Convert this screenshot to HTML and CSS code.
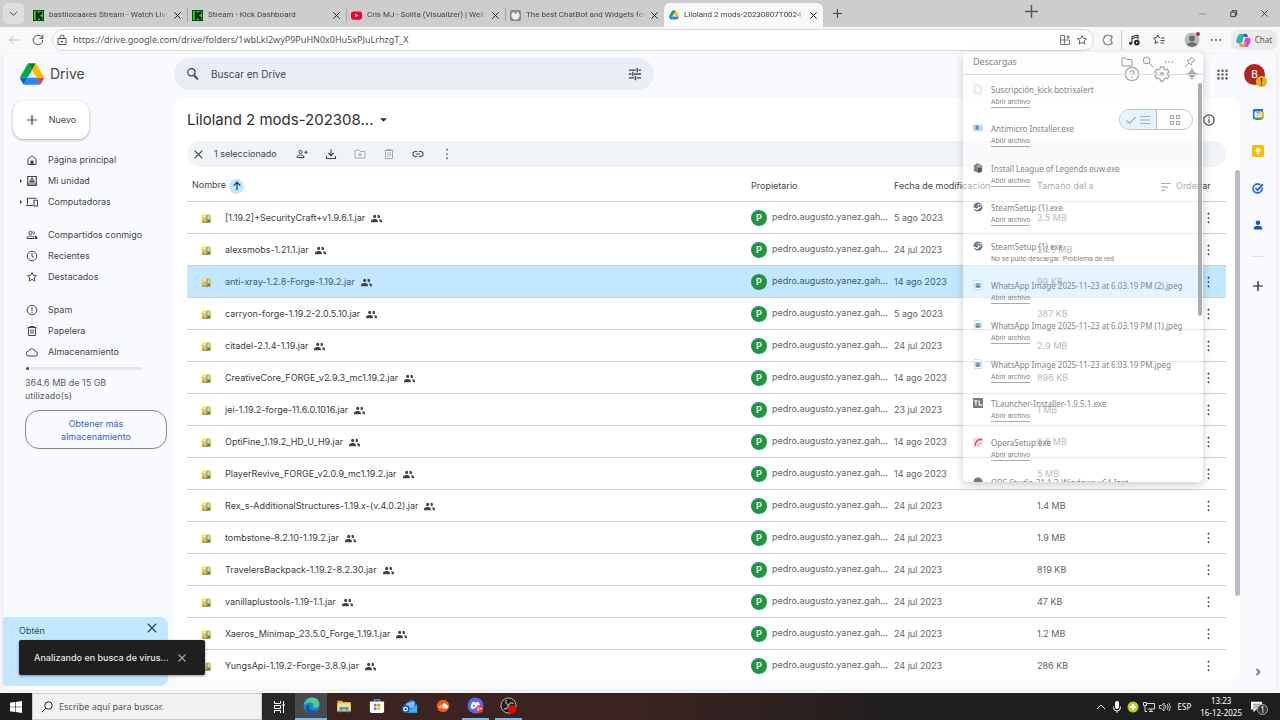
FILE: index.html
```html
<!DOCTYPE html>
<html lang="es">
<head>
<meta charset="utf-8">
<meta name="viewport" content="width=device-width, initial-scale=1">
<title>Liloland 2 mods - Google Drive</title>
<link rel="stylesheet" href="styles.css">
</head>
<body>
<svg class="sprite" aria-hidden="true">
  <symbol id="x" viewBox="0 0 10 10"><path d="M1.500 1.500l7 7M8.500 1.500l-7 7" fill="none" stroke="currentColor" stroke-width="1.100"/></symbol>
  <symbol id="plus" viewBox="0 0 12 12"><path d="M6 1v10M1 6h10" fill="none" stroke="currentColor" stroke-width="1.200"/></symbol>
  <symbol id="kick" viewBox="0 0 12 12"><path d="M0 0h12v12H0z" fill="#0b140b"/><path d="M.8.8h10.400v10.400H.8z" fill="#14e914"/><path d="M3 1.500h2.600v2h1V2.500h1V1.500h2.600v2.800h-1v1H8v1.400h1.200v1h1v2.800H7.600v-1h-1v-1h-1v2H3z" fill="#0b140b"/></symbol>
  <symbol id="drive" viewBox="0 0 87.300 78"><path fill="#0066da" d="M6.600 66.850l3.850 6.650c.8 1.400 1.950 2.500 3.300 3.300L27.500 53H0c0 1.550.4 3.100 1.200 4.500z"/><path fill="#00ac47" d="M43.650 25L29.900 1.200c-1.350.8-2.500 1.900-3.300 3.300L1.200 48.500A9 9 0 0 0 0 53h27.500z"/><path fill="#ea4335" d="M73.550 76.800c1.350-.8 2.500-1.900 3.300-3.300l1.600-2.750L86.100 57.500c.8-1.400 1.200-2.950 1.200-4.500H59.800l5.850 11.500z"/><path fill="#00832d" d="M43.650 25L57.400 1.200C56.050.4 54.500 0 52.900 0H34.400c-1.600 0-3.150.45-4.500 1.200z"/><path fill="#2684fc" d="M59.800 53H27.500L13.750 76.800c1.350.8 2.900 1.200 4.500 1.200h50.800c1.600 0 3.150-.45 4.500-1.200z"/><path fill="#ffba00" d="M73.400 26.500L60.700 4.500c-.8-1.400-1.950-2.500-3.300-3.300L43.650 25 59.800 53h27.450c0-1.550-.4-3.100-1.200-4.500z"/></symbol>
  <symbol id="search" viewBox="0 0 24 24"><path fill="currentColor" d="M15.500 14h-.79l-.28-.27A6.500 6.500 0 1 0 13 14.910l.27.280v.79l5 4.990L20.490 19zM9.500 14a4.500 4.500 0 1 1 0-9 4.500 4.500 0 0 1 0 9z"/></symbol>
  <symbol id="lens" viewBox="0 0 16 16"><path fill="none" stroke="currentColor" stroke-width="1.200" d="M9.500 9.500L15 15M6 10.500a4.500 4.500 0 1 0 0-9 4.500 4.500 0 0 0 0 9z"/></symbol>
  <symbol id="people" viewBox="0 0 24 24"><path fill="currentColor" d="M8 11a3.500 3.500 0 1 0 0-7 3.500 3.500 0 0 0 0 7zm8 0a3.500 3.500 0 1 0-2-6.300 5.500 5.500 0 0 1 0 5.600c.6.400 1.300.7 2 .7zM8 13c-2.700 0-8 1.300-8 4v3h15v-3c0-2.700-4.300-4-7-4zm8.500 0c1.400 1 2.500 2.300 2.500 4v3h5v-3c0-2.400-4.200-3.800-7.500-4z"/></symbol>
  <symbol id="people-o" viewBox="0 0 24 24"><path fill="none" stroke="currentColor" stroke-width="2" d="M9 11a3.200 3.200 0 1 0 0-6.400A3.200 3.200 0 0 0 9 11zM2 19v-1.500C2 15.500 6 14 9 14s7 1.500 7 3.500V19zM14.500 4.800a3.200 3.200 0 0 1 0 6"/><path fill="currentColor" d="M17 13c3 .5 6 2 6 4.500V20h-5v-2.500c0-2-.5-3.500-1-4.500z"/></symbol>
  <symbol id="dots-v" viewBox="0 0 4 14"><g fill="currentColor"><circle cx="2" cy="2" r="1"/><circle cx="2" cy="7" r="1"/><circle cx="2" cy="12" r="1"/></g></symbol>
  <symbol id="dots-h" viewBox="0 0 14 4"><g fill="currentColor"><circle cx="3" cy="2" r=".9"/><circle cx="7" cy="2" r=".9"/><circle cx="11" cy="2" r=".9"/></g></symbol>
  <symbol id="jar" viewBox="0 0 12 12"><path fill="#d9c63e" d="M1 3.500L2.500 1.500h7L11 3.500V10l-1 1H1.500L1 10z"/><path fill="#f2e98c" d="M1.500 3.500L3 2h4L6 5H1.500z"/><path fill="#b5a432" d="M1 9h5v2H1.500z"/><path fill="#7e8a80" d="M6 2.500h2V11H6z"/><path fill="#c9d3dc" d="M7 3.500h2.500V7H7z"/><path fill="#51625c" d="M8 7h1.700v3H8z"/></symbol>
  <symbol id="steam" viewBox="0 0 12 12"><circle cx="6" cy="6" r="5.500" fill="#657789"/><path d="M.8 7l4 2 3.500-3" fill="none" stroke="#fff" stroke-width="1.600"/><circle cx="7.800" cy="4.600" r="2" fill="#657789" stroke="#fff"/></symbol>
  <symbol id="image" viewBox="0 0 12 12"><path d="M1.500.5h7l2 2v9h-9z" fill="#fff" stroke="#bcc8d2" stroke-width=".8"/><path d="M3 3.500h6v5.500H3z" fill="#7eaed2"/><path d="M3 9l2.500-2.500L9 9z" fill="#49789b"/></symbol>
  <symbol id="star" viewBox="0 0 24 24"><path fill="none" stroke="currentColor" stroke-width="1.900" stroke-linejoin="round" d="M12 3l2.700 5.800 6.300.7-4.700 4.300 1.300 6.200-5.600-3.200L6.400 20l1.300-6.200L3 9.500l6.300-.7z"/></symbol>
  <symbol id="trash" viewBox="0 0 24 24"><path fill="none" stroke="currentColor" stroke-width="2" d="M3 5h18M8 5V3h8v2M5 5v16h14V5M10 8.500v9M14 8.500v9"/></symbol>
</svg>

<header class="tabstrip">
  <button class="tab-menu" aria-label="Menú de pestañas"><svg viewBox="0 0 10 10"><path d="M1 3l4 4 4-4" fill="none" stroke="#333"/></svg></button>
  <div class="tab"><svg class="fav"><use href="#kick"/></svg><span>bastiiocaares Stream - Watch Live</span><button aria-label="Cerrar"><svg><use href="#x"/></svg></button></div>
  <div class="tab"><svg class="fav"><use href="#kick"/></svg><span>Stream - Kick Dashboard</span><button aria-label="Cerrar"><svg><use href="#x"/></svg></button></div>
  <div class="tab"><svg class="fav" viewBox="0 0 12 12"><rect y="1.500" width="12" height="9" rx="2.500" fill="#f00033"/><path d="M4.600 4l3.600 2-3.600 2z" fill="#fff"/></svg><span>Cris MJ - Solita (Visualizer) | Welcome</span><button aria-label="Cerrar"><svg><use href="#x"/></svg></button></div>
  <div class="tab"><svg class="fav" viewBox="0 0 12 12"><rect width="12" height="12" rx="2" fill="#888"/><circle cx="6" cy="6" r="4.500" fill="#eee"/><path d="M6 0v4M4 2l2 2 2-2" stroke="#888" fill="none"/></svg><span>The best ChatBot and Widgets for</span><button aria-label="Cerrar"><svg><use href="#x"/></svg></button></div>
  <div class="tab active"><svg class="fav"><use href="#drive"/></svg><span>Liloland 2 mods-20230807T002415Z</span><button aria-label="Cerrar"><svg><use href="#x"/></svg></button></div>
  <button class="new-tab" aria-label="Nueva pestaña"><svg><use href="#plus"/></svg></button>
  <div class="window-controls">
    <button aria-label="Minimizar"><svg viewBox="0 0 10 10"><path d="M1 5.500h8" stroke="#888"/></svg></button>
    <button aria-label="Restaurar"><svg viewBox="0 0 10 10"><path d="M2 3.500h5v5H2zM3.500 3V1.800h5v5H7.500" fill="none" stroke="#222" stroke-width=".9"/></svg></button>
    <button aria-label="Cerrar ventana"><svg><use href="#x"/></svg></button>
  </div>
</header>

<div class="toolbar">
  <button class="back" aria-label="Atrás"><svg viewBox="0 0 12 12"><path d="M11 6H1.500M5.500 2l-4 4 4 4" fill="none" stroke="currentColor"/></svg></button>
  <button aria-label="Actualizar"><svg viewBox="0 0 12 12"><path d="M10.500 4.300A4.800 4.800 0 1 0 10.800 6M10.800 1v3.500H7.500" fill="none" stroke="currentColor"/></svg></button>
  <div class="address">
    <svg viewBox="0 0 12 12"><path d="M2 4.500h8v6H2zM4 4.500V3a2 2 0 0 1 4 0v1.500" fill="none" stroke="currentColor"/><circle cx="6" cy="7.500" r=".8"/></svg>
    <input aria-label="Dirección" value="https://drive.google.com/drive/folders/1wbLkl2wyP9PuHN0x0Hu5xPJuLrhzgT_X">
    <button aria-label="Aplicaciones"><svg viewBox="0 0 12 12"><path d="M1.500 1.500h4v9h-4zM1.500 6h9v4.500h-5M9 1v4M7 3h4" fill="none" stroke="currentColor" stroke-width=".8"/></svg></button>
    <button aria-label="Favorito"><svg><use href="#star"/></svg></button>
  </div>
  <div class="tools">
    <button aria-label="Extensiones"><svg viewBox="0 0 12 12"><path d="M4.300 2a1.600 1.600 0 0 1 3 0H10v2.500a1.500 1.500 0 1 0 0 3V10H7.500a1.700 1.700 0 0 1-3.200 0H2.200V7.800a1.800 1.800 0 0 1 0-3.400V2z" fill="none" stroke="currentColor" stroke-width=".9"/></svg></button>
    <button class="divided" aria-label="Multimedia"><svg viewBox="0 0 12 12"><path d="M4 9V2.500L10 1v4.500M4 4.500l6-1.500" fill="none" stroke="#222"/><circle cx="2.600" cy="9.300" r="1.500" fill="#222"/><circle cx="8.800" cy="8.600" r="2.800" fill="#222"/><path d="M8 7.400l2 1.200-2 1.200z" fill="#fff"/></svg></button>
    <button aria-label="Favoritos"><svg viewBox="0 0 12 12"><path d="M7 3.500H6L4.700 1 3.400 3.800.5 4.200l2.200 2L2 9.500 4.700 8l1 .6M8 4h3.500M7.500 6.500h4M7.500 9h3.500" fill="none" stroke="#333" stroke-width=".9"/></svg></button>
    <button class="profile" aria-label="Perfil"><svg viewBox="0 0 16 16"><circle cx="8" cy="8" r="7.500" fill="#bbb"/><circle cx="8" cy="6.500" r="3" fill="#6b6b6b"/><path d="M3 12.500c1-3 9-3 10 0-2 3-8 3-10 0z" fill="#6b6b6b"/><circle cx="14" cy="2" r="1.900" fill="#c50f35"/></svg></button>
    <button class="more" aria-label="Configuración y más"><svg><use href="#dots-h"/></svg></button>
  </div>
  <button class="chat"><svg viewBox="0 0 16 16"><path d="M5 1h5c2 0 2 1 2.500 3H8L6 11H3C0 11 0 8 1 6s2-5 4-5z" fill="#168fd7"/><path d="M1 7c.5-3 2-6 4-6h3L5 11H3C1 11 .7 9 1 7z" fill="#37b7a5"/><path d="M11 15H6c-2 0-2-1-2.500-3H8l2-7h3c3 0 3 3 2 5s-2 5-4 5z" fill="#cf4ccb"/><path d="M3.500 12H8l1-3.500 2 1.500-2 5H6c-2 0-2-1-2.500-3z" fill="#f29a45"/><path d="M9 1h1c2 0 2 1 2.500 3H9z" fill="#294fc5"/></svg>Chat</button>
</div>

<div class="drive">
  <header class="drive-head">
    <a class="brand" href="#"><svg><use href="#drive"/></svg>Drive</a>
    <form class="search" role="search"><svg><use href="#search"/></svg><input aria-label="Buscar en Drive" placeholder="Buscar en Drive"><button type="button" aria-label="Búsqueda avanzada"><svg viewBox="0 0 16 16"><path d="M1 3.500h8M12 3.500h3M10.500 1v5M1 8h3M7 8h8M5.500 5.500v5M1 12.500h6M10 12.500h5M8.500 10v5" fill="none" stroke="currentColor" stroke-width="1.500"/></svg></button></form>
    <div class="head-tools">
      <button aria-label="Ayuda"><svg viewBox="0 0 16 16"><circle cx="8" cy="8" r="6.600" fill="none" stroke="currentColor" stroke-width="1.300"/><path d="M6 6.500c0-2.600 4-2.600 4 0 0 1.300-2 1.600-2 3M8 10.800v1.500" fill="none" stroke="currentColor" stroke-width="1.300"/></svg></button>
      <button aria-label="Configuración"><svg viewBox="0 0 16 16"><path d="M6.500 1h3l.5 2 1.500.9 2-.6L15 6l-1.500 1.300v1.400L15 10l-1.500 2.700-2-.6-1.500.9-.5 2h-3L6 13l-1.500-.9-2 .6L1 10l1.500-1.300V7.300L1 6l1.500-2.700 2 .6L6 3z" fill="none" stroke="currentColor" stroke-width="1.300"/><circle cx="8" cy="8" r="2" fill="currentColor"/></svg></button>
      <button aria-label="Gemini"><svg viewBox="0 0 16 16"><path d="M8 1c.9 4.200 2.800 6.100 7 7-4.200.9-6.100 2.800-7 7-.9-4.200-2.800-6.100-7-7 4.200-.9 6.100-2.800 7-7z" fill="currentColor"/></svg></button>
      <button aria-label="Aplicaciones de Google"><svg viewBox="0 0 16 16"><path d="M3 2v12M8 2v12M13 2v12" stroke="currentColor" stroke-width="2.600" stroke-dasharray="2.600 2.100" fill="none"/></svg></button>
      <button class="account" aria-label="Cuenta">B<svg viewBox="0 0 10 10"><circle cx="5" cy="5" r="5" fill="#efb01c"/><path d="M5 1.800v4M5 7v1.300" stroke="#4d3300" stroke-width="1.300"/></svg></button>
    </div>
  </header>

  <div class="body">
    <aside class="sidebar">
      <button class="new"><svg><use href="#plus"/></svg>Nuevo</button>
      <nav>
        <div class="group">
          <a href="#"><svg viewBox="0 0 24 24"><path d="M4 10l8-6.500L20 10v11H4z" fill="none" stroke="currentColor" stroke-width="2"/><path d="M9 13h6v8H9z" fill="currentColor"/></svg>Página principal</a>
          <a href="#" class="tree"><svg viewBox="0 0 24 24"><path d="M3.500 3h17v18h-17zM4 18h16" fill="none" stroke="currentColor" stroke-width="2.400"/><path d="M12 6.500l4 7H8z" fill="none" stroke="currentColor" stroke-width="2.600"/></svg>Mi unidad</a>
          <a href="#" class="tree"><svg viewBox="0 0 24 24"><path d="M3 17V4.500h18M0 19h14M16 8.500h7V20h-7z" fill="none" stroke="currentColor" stroke-width="2.200"/></svg>Computadoras</a>
        </div>
        <div class="group">
          <a href="#"><svg><use href="#people-o"/></svg>Compartidos conmigo</a>
          <a href="#"><svg viewBox="0 0 24 24"><circle cx="12" cy="12" r="9.500" fill="none" stroke="currentColor" stroke-width="2"/><path d="M12 6v6.500l4 2.500" fill="none" stroke="currentColor" stroke-width="2"/></svg>Recientes</a>
          <a href="#"><svg><use href="#star"/></svg>Destacados</a>
        </div>
        <div class="group">
          <a href="#"><svg viewBox="0 0 24 24"><circle cx="12" cy="12" r="9.500" fill="none" stroke="currentColor" stroke-width="2"/><path d="M12 6v7.500M12 15.500v2.500" stroke="currentColor" stroke-width="2.200"/></svg>Spam</a>
          <a href="#"><svg><use href="#trash"/></svg>Papelera</a>
          <a href="#"><svg viewBox="0 0 24 24"><path d="M6 20a5 5 0 0 1-.8-10A7 7 0 0 1 18.500 11 4.500 4.500 0 0 1 18.500 20z" fill="none" stroke="currentColor" stroke-width="2"/></svg>Almacenamiento</a>
        </div>
      </nav>
      <div class="meter"><i></i></div>
      <p class="quota">364.6 MB de 15 GB utilizado(s)</p>
      <button class="upgrade">Obtener más almacenamiento</button>
      <section class="promo"><span>Obtén</span><button aria-label="Cerrar"><svg><use href="#x"/></svg></button></section>
    </aside>

    <main class="panel">
      <div class="title-row">
        <h1>Liloland 2 mods-202308... <svg viewBox="0 0 10 5"><path d="M0 0h10L5 5z" fill="currentColor"/></svg></h1>
        <div class="view">
          <button class="on" aria-label="Vista de lista"><svg viewBox="0 0 12 12"><path d="M1.500 6.500l3 3 6-6.500" fill="none" stroke="currentColor" stroke-width="1.200"/></svg><svg viewBox="0 0 12 12"><path d="M1 2.500h10M1 6h10M1 9.500h10" stroke="currentColor" stroke-width="1.200"/></svg></button>
          <button aria-label="Vista de cuadrícula"><svg viewBox="0 0 12 12"><path d="M1.500 1.500h3v3h-3zM7.500 1.500h3v3h-3zM1.500 7.500h3v3h-3zM7.500 7.500h3v3h-3z" fill="none" stroke="currentColor" stroke-width="1.200"/></svg></button>
        </div>
        <button class="info" aria-label="Ver detalles"><svg viewBox="0 0 12 12"><circle cx="6" cy="6" r="5.200" fill="none" stroke="currentColor" stroke-width="1.200"/><path d="M6 2.800v1.300M6 5v4" stroke="currentColor" stroke-width="1.200"/></svg></button>
      </div>
      <div class="actions">
        <button aria-label="Quitar selección"><svg><use href="#x"/></svg></button><span>1 seleccionado</span>
        <button aria-label="Compartir"><svg viewBox="0 0 24 24"><path fill="none" stroke="currentColor" stroke-width="2" d="M9 11a3.200 3.200 0 1 0 0-6.400A3.200 3.200 0 0 0 9 11zM2 19v-1.500C2 15.500 6 14 9 14s7 1.500 7 3.500V19zM20 5v7M16.500 8.500h7"/></svg></button>
        <button aria-label="Descargar"><svg viewBox="0 0 24 24"><path fill="none" stroke="currentColor" stroke-width="2.200" d="M12 3v12M6.500 10l5.500 5.500 5.500-5.500M3 16v5h18v-5"/></svg></button>
        <button class="off" aria-label="Mover"><svg viewBox="0 0 24 24"><path fill="none" stroke="currentColor" stroke-width="2" d="M2 4.500h8l2 2.500h10v13H2zM12 9.500v7.500M8.500 13h7"/></svg></button>
        <button class="off" aria-label="Eliminar"><svg><use href="#trash"/></svg></button>
        <button aria-label="Copiar vínculo"><svg viewBox="0 0 24 24"><path fill="none" stroke="currentColor" stroke-width="2.200" d="M10.500 7H7a5 5 0 0 0 0 10h3.500M13.500 7H17a5 5 0 0 1 0 10h-3.500M8 12h8"/></svg></button>
        <button aria-label="Más acciones"><svg><use href="#dots-v"/></svg></button>
      </div>
      <div class="listing">
        <table>
          <colgroup><col><col class="c-owner"><col class="c-date"><col class="c-size"><col class="c-menu"></colgroup>
          <thead><tr><th>Nombre<span class="sort"><svg viewBox="0 0 12 12"><path d="M6 11V1.500M2 5.500l4-4 4 4" fill="none" stroke="#134a68" stroke-width="1.500"/></svg></span></th><th>Propietario</th><th>Fecha de modificación</th><th><div class="cut">Tamaño del archivo</div></th><th class="order"><svg viewBox="0 0 12 12"><path d="M1 2.500h10M1 6h7M1 9.500h4" stroke="currentColor" stroke-width="1.200"/></svg>Ordenar</th></tr></thead>
          <tbody>
            <tr><td><svg class="jar"><use href="#jar"/></svg>[1.19.2]+SecurityCraft+v1.9.6.1.jar<svg class="shared"><use href="#people"/></svg></td><td><b>P</b>pedro.augusto.yanez.gah...</td><td>5 ago 2023</td><td>3.5 MB</td><td><button aria-label="Más"><svg><use href="#dots-v"/></svg></button></td></tr>
            <tr><td><svg class="jar"><use href="#jar"/></svg>alexsmobs-1.21.1.jar<svg class="shared"><use href="#people"/></svg></td><td><b>P</b>pedro.augusto.yanez.gah...</td><td>24 jul 2023</td><td>24.5 MB</td><td><button aria-label="Más"><svg><use href="#dots-v"/></svg></button></td></tr>
            <tr class="selected"><td><svg class="jar"><use href="#jar"/></svg>anti-xray-1.2.8-Forge-1.19.2.jar<svg class="shared"><use href="#people"/></svg></td><td><b>P</b>pedro.augusto.yanez.gah...</td><td>14 ago 2023</td><td>99 KB</td><td><button aria-label="Más"><svg><use href="#dots-v"/></svg></button></td></tr>
            <tr><td><svg class="jar"><use href="#jar"/></svg>carryon-forge-1.19.2-2.0.5.10.jar<svg class="shared"><use href="#people"/></svg></td><td><b>P</b>pedro.augusto.yanez.gah...</td><td>5 ago 2023</td><td>387 KB</td><td><button aria-label="Más"><svg><use href="#dots-v"/></svg></button></td></tr>
            <tr><td><svg class="jar"><use href="#jar"/></svg>citadel-2.1.4-1.19.jar<svg class="shared"><use href="#people"/></svg></td><td><b>P</b>pedro.augusto.yanez.gah...</td><td>24 jul 2023</td><td>2.9 MB</td><td><button aria-label="Más"><svg><use href="#dots-v"/></svg></button></td></tr>
            <tr><td><svg class="jar"><use href="#jar"/></svg>CreativeCore_FORGE_v2.9.3_mc1.19.2.jar<svg class="shared"><use href="#people"/></svg></td><td><b>P</b>pedro.augusto.yanez.gah...</td><td>14 ago 2023</td><td>896 KB</td><td><button aria-label="Más"><svg><use href="#dots-v"/></svg></button></td></tr>
            <tr><td><svg class="jar"><use href="#jar"/></svg>jei-1.19.2-forge-11.6.0.1016.jar<svg class="shared"><use href="#people"/></svg></td><td><b>P</b>pedro.augusto.yanez.gah...</td><td>23 jul 2023</td><td>1 MB</td><td><button aria-label="Más"><svg><use href="#dots-v"/></svg></button></td></tr>
            <tr><td><svg class="jar"><use href="#jar"/></svg>OptiFine_1.19.2_HD_U_H9.jar<svg class="shared"><use href="#people"/></svg></td><td><b>P</b>pedro.augusto.yanez.gah...</td><td>14 ago 2023</td><td>6.6 MB</td><td><button aria-label="Más"><svg><use href="#dots-v"/></svg></button></td></tr>
            <tr><td><svg class="jar"><use href="#jar"/></svg>PlayerRevive_FORGE_v2.0.9_mc1.19.2.jar<svg class="shared"><use href="#people"/></svg></td><td><b>P</b>pedro.augusto.yanez.gah...</td><td>14 ago 2023</td><td>5 MB</td><td><button aria-label="Más"><svg><use href="#dots-v"/></svg></button></td></tr>
            <tr><td><svg class="jar"><use href="#jar"/></svg>Rex_s-AdditionalStructures-1.19.x-(v.4.0.2).jar<svg class="shared"><use href="#people"/></svg></td><td><b>P</b>pedro.augusto.yanez.gah...</td><td>24 jul 2023</td><td>1.4 MB</td><td><button aria-label="Más"><svg><use href="#dots-v"/></svg></button></td></tr>
            <tr><td><svg class="jar"><use href="#jar"/></svg>tombstone-8.2.10-1.19.2.jar<svg class="shared"><use href="#people"/></svg></td><td><b>P</b>pedro.augusto.yanez.gah...</td><td>24 jul 2023</td><td>1.9 MB</td><td><button aria-label="Más"><svg><use href="#dots-v"/></svg></button></td></tr>
            <tr><td><svg class="jar"><use href="#jar"/></svg>TravelersBackpack-1.19.2-8.2.30.jar<svg class="shared"><use href="#people"/></svg></td><td><b>P</b>pedro.augusto.yanez.gah...</td><td>24 jul 2023</td><td>819 KB</td><td><button aria-label="Más"><svg><use href="#dots-v"/></svg></button></td></tr>
            <tr><td><svg class="jar"><use href="#jar"/></svg>vanillaplustools-1.19-1.1.jar<svg class="shared"><use href="#people"/></svg></td><td><b>P</b>pedro.augusto.yanez.gah...</td><td>24 jul 2023</td><td>47 KB</td><td><button aria-label="Más"><svg><use href="#dots-v"/></svg></button></td></tr>
            <tr><td><svg class="jar"><use href="#jar"/></svg>Xaeros_Minimap_23.5.0_Forge_1.19.1.jar<svg class="shared"><use href="#people"/></svg></td><td><b>P</b>pedro.augusto.yanez.gah...</td><td>24 jul 2023</td><td>1.2 MB</td><td><button aria-label="Más"><svg><use href="#dots-v"/></svg></button></td></tr>
            <tr><td><svg class="jar"><use href="#jar"/></svg>YungsApi-1.19.2-Forge-3.8.9.jar<svg class="shared"><use href="#people"/></svg></td><td><b>P</b>pedro.augusto.yanez.gah...</td><td>24 jul 2023</td><td>286 KB</td><td><button aria-label="Más"><svg><use href="#dots-v"/></svg></button></td></tr>
          </tbody>
        </table>
        <div class="scroll"></div>
      </div>
    </main>

    <aside class="rail">
      <button aria-label="Calendar"><svg viewBox="0 0 13 13"><path d="M1 2a1 1 0 0 1 1-1h10v3H3v8H2a1 1 0 0 1-1-1z" fill="#2b6fdb"/><path d="M10 4h3v6h-3z" fill="#fbbc04"/><path d="M3 10h7v3H3z" fill="#34a853"/><path d="M10 10h3l-3 3z" fill="#ea4335"/><path d="M3 4h7v6H3z" fill="#fff"/><text x="6.500" y="9" font-size="5" text-anchor="middle" fill="#1967d2">31</text></svg></button>
      <button aria-label="Keep"><svg viewBox="0 0 13 13"><rect width="13" height="13" rx="1.500" fill="#fbbc04"/><circle cx="6.500" cy="5.800" r="2.600" fill="#fff"/><path d="M5.200 8.500h2.600V10H5.200z" fill="#fff"/></svg></button>
      <button aria-label="Tasks"><svg viewBox="0 0 13 13"><circle cx="6" cy="7" r="4.800" fill="none" stroke="#2f6fe0" stroke-width="2"/><path d="M3.800 6.500l2.200 2.300 5.800-6.500" fill="none" stroke="#f8fafd" stroke-width="3"/><path d="M3.800 6.500l2.200 2.300 5.800-6.500" fill="none" stroke="#2463c8" stroke-width="1.900"/></svg></button>
      <button aria-label="Contactos"><svg viewBox="0 0 13 13"><circle cx="6.500" cy="4" r="2.500" fill="#1a55c5"/><path d="M2 11.500V9.500c0-3 9-3 9 0v2z" fill="#1a55c5"/></svg></button>
      <hr>
      <button aria-label="Obtener complementos"><svg><use href="#plus"/></svg></button>
      <button class="hide" aria-label="Ocultar panel"><svg viewBox="0 0 12 12"><path d="M4.500 3l3 3-3 3" fill="none" stroke="#555" stroke-width="1.400"/></svg></button>
    </aside>
  </div>

  <div class="toast" role="status"><span>Analizando en busca de virus...</span><button aria-label="Cerrar"><svg><use href="#x"/></svg></button></div>
</div>

<footer class="taskbar">
  <button class="start" aria-label="Inicio"><svg viewBox="0 0 12 12"><path d="M0 1.700l5-.7v4.700H0zM5.600.9L12 0v5.700H5.600zM0 6.300h5V11l-5-.7zM5.600 6.300H12V12l-6.400-.9z" fill="#fff"/></svg></button>
  <label class="task-search"><svg viewBox="0 0 12 12"><circle cx="7.500" cy="4.500" r="3.700" fill="none" stroke="#222"/><path d="M4.700 7.300L.8 11.200" stroke="#222"/></svg><input placeholder="Escribe aquí para buscar." aria-label="Escribe aquí para buscar"></label>
  <button class="taskview" aria-label="Vista de tareas"><svg viewBox="0 0 12 12"><path d="M1.500 0v2.500h6V0M1.500 4.500h6v3h-6zM1.500 12V9.500h6V12M10.500 0v12" fill="none" stroke="#fff"/><path d="M9.500 3h2v2h-2z" fill="#fff"/></svg></button>
  <div class="apps">
    <button class="current open" aria-label="Edge"><svg viewBox="0 0 18 18"><circle cx="9" cy="9" r="8.500" fill="#1a84d2"/><path d="M1 8C2 3 6 .5 9.500.5c5 0 8 3.500 8 7 0 2.500-2 4-4.500 4-2 0-3-1-2-2.500C12 6 8 4 1 8z" fill="#4fd08a"/><path d="M1 8C2 3 6 .5 9.500.5 5 1 6 5 1 8z" fill="#35c1c8"/><path d="M7 8c-2 4 1 8 9 6-3 4-9 4-12.500 1C2 12 3 8 7 8z" fill="#1554a4"/></svg></button>
    <button aria-label="Explorador"><svg viewBox="0 0 18 18"><path d="M1.500 3h5l1.500 1.500h8.500V15h-15z" fill="#e8b33d"/><path d="M1.500 6h15v9h-15z" fill="#fbdd7c"/><path d="M4 10h10v6h-3v-3H7v3H4z" fill="#4a9ad4"/></svg></button>
    <button aria-label="Store"><svg viewBox="0 0 18 18"><path d="M6 5V2h6v3" fill="none" stroke="#3999d0" stroke-width="1.500"/><path d="M1 4h16v11a2 2 0 0 1-2 2H3a2 2 0 0 1-2-2z" fill="#fff"/><path d="M5.500 6.500h3v3h-3z" fill="#ef5a3c"/><path d="M9.500 6.500h3v3h-3z" fill="#7db928"/><path d="M5.500 10.500h3v3h-3z" fill="#22a3e6"/><path d="M9.500 10.500h3v3h-3z" fill="#f8b51d"/></svg></button>
    <button aria-label="Outlook"><svg viewBox="0 0 18 18"><path d="M2 8l9-6.500L17 7v9.500H3z" fill="#1f6ed0"/><path d="M5 6l9-2.500V11H5z" fill="#7cc3f5"/><path d="M3 16.500L17 8v8.500z" fill="#3fb2f2"/><rect y="8.500" width="8" height="8" rx="1.500" fill="#0c59b0"/><circle cx="4" cy="12.500" r="2" fill="none" stroke="#fff" stroke-width="1.300"/></svg></button>
    <button aria-label="SoundCloud"><svg viewBox="0 0 18 18"><circle cx="9" cy="9" r="7" fill="#f0581a"/><path d="M9 6.500c2-1 4 .5 4 2 2 0 2 3 0 3H9zM5 9v2M6.500 8v3.500M8 7v4.500" fill="#fff" stroke="#fff" stroke-width=".6"/></svg></button>
    <button class="open" aria-label="Discord"><svg viewBox="0 0 18 18"><circle cx="9" cy="9" r="8.500" fill="#5865e8"/><path d="M4 12c0-3 .5-5 1.500-6.500L8 5l.5 1h1l.5-1 2.500.5C13.500 7 14 9 14 12l-2.500 1-1-1h-3l-1 1z" fill="#fff"/><circle cx="7.300" cy="9.300" r="1" fill="#5865e8"/><circle cx="13.200" cy="12.800" r="4" fill="#df4146"/><text x="13.200" y="15" font-size="5" text-anchor="middle" fill="#fff">9+</text></svg></button>
    <button class="open" aria-label="OBS"><svg viewBox="0 0 18 18"><circle cx="9" cy="9" r="8" fill="#1b1b1b" stroke="#ccc"/><path d="M7 3c-2 3 0 5.500 3 5.500M14.500 7c-3-2-5.500 0-5.500 3M4 12.500c3.500.5 5-1.500 4.500-4" fill="none" stroke="#aaa" stroke-width="1.300"/><circle cx="13" cy="13" r="4.200" fill="#f00000"/></svg></button>
  </div>
  <div class="tray">
    <svg viewBox="0 0 12 12"><path d="M2 8l4-4 4 4" fill="none" stroke="#fff"/></svg>
    <svg viewBox="0 0 12 12"><rect x="4" y="0" width="4" height="8" rx="2" fill="#fff"/><path d="M2.500 5.500v1a3.500 3.500 0 0 0 7 0v-1M6 10v2" fill="none" stroke="#fff"/></svg>
    <svg viewBox="0 0 12 12"><circle cx="6" cy="6" r="5.500" fill="#a9d51d"/><path d="M6 3v6M3 6h6" stroke="#fff" stroke-width="2.200"/></svg>
    <svg viewBox="0 0 12 12"><path d="M4 2.500h7.500v5.500H5M6 10.500h4M8 8v2.500M.5 1.500h3v3h-3zM2 4.500v6h2" fill="none" stroke="#eee" stroke-width=".9"/></svg>
    <svg viewBox="0 0 12 12"><path d="M.5 4.500h2L5 2v8L2.500 7.500h-2zM6.500 4.500q1 1.500 0 3M8.200 3q2 3 0 6M10 1.800q2.800 4 0 8.400" fill="none" stroke="#eee" stroke-width=".8"/></svg>
    <span>ESP</span>
    <time>13:23<br>16-12-2025</time>
    <div class="notice"><svg viewBox="0 0 14 12"><path d="M0 0h13v9H6l-3 3V9H0z" fill="#fff"/><path d="M2.500 2.800h8M2.500 5h8M2.500 7.200h5" stroke="#222" stroke-width=".7"/></svg><i>1</i></div>
  </div>
</footer>

<section class="downloads" aria-label="Descargas">
  <header><h2>Descargas</h2>
    <button aria-label="Abrir carpeta"><svg viewBox="0 0 12 12"><path d="M1 2h3.500l1 1.500H11V10H1z" fill="none" stroke="currentColor" stroke-width=".8"/></svg></button>
    <button aria-label="Buscar descargas"><svg viewBox="0 0 16 16"><use href="#lens"/></svg></button>
    <button aria-label="Más opciones"><svg><use href="#dots-h"/></svg></button>
    <button aria-label="Anclar"><svg viewBox="0 0 12 12"><path d="M7.500 1l3.500 3.500-2.500 1-1.500 3.500L3 5l3.500-1.500zM5 7l-4 4" fill="none" stroke="currentColor" stroke-width=".8"/></svg></button>
  </header>
  <div class="dl-scroll"></div>
  <ul>
    <li><svg viewBox="0 0 12 12"><path d="M2 1h5l3 3v7H2z" fill="#fafafa" stroke="#ccc" stroke-width=".8"/></svg><div>Suscripción_kick.botrixalert<a href="#">Abrir archivo</a></div></li>
    <li><svg viewBox="0 0 12 12"><path d="M0 2h12v8H0z" fill="#c3d8ea"/><path d="M3 3h4v5H3z" fill="#5d94c4"/></svg><div>Antimicro Installer.exe<a href="#">Abrir archivo</a></div></li>
    <li><svg viewBox="0 0 12 12"><path d="M1 3l4-3 6 3v7l-4 2-6-2z" fill="#7c8c80"/><path d="M5 2h4v3H5z" fill="#c7a17e"/><path d="M6 6h4v5H6z" fill="#455a54"/></svg><div>Install League of Legends euw.exe<a href="#">Abrir archivo</a></div></li>
    <li><svg><use href="#steam"/></svg><div>SteamSetup (1).exe<a href="#">Abrir archivo</a></div></li>
    <li><svg><use href="#steam"/></svg><div>SteamSetup (1).exe<small>No se pudo descargar: Problema de red</small></div></li>
    <li><svg><use href="#image"/></svg><div>WhatsApp Image 2025-11-23 at 6.03.19 PM (2).jpeg<a href="#">Abrir archivo</a></div></li>
    <li><svg><use href="#image"/></svg><div>WhatsApp Image 2025-11-23 at 6.03.19 PM (1).jpeg<a href="#">Abrir archivo</a></div></li>
    <li><svg><use href="#image"/></svg><div>WhatsApp Image 2025-11-23 at 6.03.19 PM.jpeg<a href="#">Abrir archivo</a></div></li>
    <li><svg viewBox="0 0 12 12"><path d="M0 0h12v12H0z" fill="#718078"/><path d="M1.500 3.500h4M3.500 3.500v5.500M7.500 3v5.500h3.500" fill="none" stroke="#fff" stroke-width="1.400"/></svg><div>TLauncher-Installer-1.9.5.1.exe<a href="#">Abrir archivo</a></div></li>
    <li><svg viewBox="0 0 12 12"><path d="M.5.5h11v11H.5z" fill="#f5dfe3"/><path d="M3 11c-1-5 2-8.500 8-8" fill="none" stroke="#dc5875" stroke-width="2"/><path d="M7 11c-1-2 0-4 3-4" fill="none" stroke="#e99aac" stroke-width="1.200"/></svg><div>OperaSetup.exe<a href="#">Abrir archivo</a></div></li>
    <li><svg viewBox="0 0 12 12"><circle cx="6" cy="6" r="5.500" fill="#777"/></svg><div>OBS-Studio-31.1.2-Windows-x64-Inst</div></li>
  </ul>
</section>
<svg class="pointer" viewBox="0 0 14 14" aria-hidden="true"><path d="M7 0v14M0 7h14" stroke="#555" stroke-width="1.600"/></svg>
</body>
</html>
```
FILE: styles.css
```css
* { box-sizing: border-box; }
body {
  margin: 0; height: 100vh; overflow: hidden; position: relative;
  display: flex; flex-direction: column;
  font: 9px/14px Inter, Roboto, sans-serif; color: #444547; background: #f6f6f7;
}
.sprite { position: absolute; width: 0; height: 0; }
button { border: 0; padding: 0; margin: 0; background: none; color: inherit; font: inherit; display: flex; align-items: center; justify-content: center; }
input { border: 0; outline: 0; padding: 0; background: none; color: inherit; font: inherit; min-width: 0; flex: 1; }
input::placeholder { color: inherit; opacity: 1; }
a { color: inherit; text-decoration: none; }
svg { width: 12px; height: 12px; flex: none; display: block; }

/* Browser window */
.toolbar, .downloads, .taskbar { font-family: "Noto Sans", "Open Sans", sans-serif; }
.tabstrip { flex: none; height: 27px; display: flex; align-items: center; background: #cdcdcd; padding: 0 0 0 3px; font-family: Roboto, "Noto Sans", sans-serif; font-size: 8px; }
.tab-menu { width: 21px; height: 21px; border-radius: 5px; background: #dedede; margin-right: 4px; }
.tab-menu svg { width: 9px; height: 9px; }
.tab { flex: 0 1 159px; min-width: 0; height: 24px; align-self: flex-end; display: flex; align-items: center; gap: 5px; padding: 0 5px; position: relative; color: #444; }
.tab + .tab::before { content: ""; width: 1px; height: 14px; background: #a5a5a5; margin: 0 -1px 0 -5px; }
.tab span { flex: 1; min-width: 0; overflow: hidden; white-space: nowrap; mask-image: linear-gradient(90deg, #000 93%, transparent); }
.tab .fav { width: 11px; height: 11px; }
.tab button svg { width: 9px; height: 9px; color: #222; }
.tab.active { background: #f8f8f8; border-radius: 6px 6px 0 0; }
.tab.active::before { visibility: hidden; }
.tab.active .fav { width: 10px; height: 10px; }
.new-tab { width: 28px; height: 24px; }
.new-tab svg { width: 11px; height: 11px; }
.window-controls { margin-left: auto; display: flex; }
.window-controls button { width: 31px; height: 26px; }
.window-controls svg { width: 9px; height: 9px; }

.toolbar { flex: none; height: 26px; display: flex; align-items: center; background: #f8f8f8; padding: 0 3px 0 2px; color: #555; font-size: 9px; }
.toolbar > button:not(.chat) { width: 24px; }
.toolbar > .back { color: #bbb; }
.address { flex: 1; min-width: 0; height: 22px; display: flex; align-items: center; gap: 5px; border: 1px solid #d5d8da; border-radius: 11px; background: #fff; padding: 0 5px 0 3px; margin-left: 2px; }
.address svg { width: 12px; height: 12px; }
.tools { display: flex; align-items: center; margin-left: 1px; }
.tools button { width: 25px; height: 20px; }
.tools .divided { border-left: 1px solid #ccc; margin-left: 1px; }
.tools .profile { width: 42px; }
.tools .profile svg { width: 16px; height: 16px; }
.tools .more { width: 14px; margin: 0 8px 0 -4px; }
.tools .more svg { width: 14px; }
.chat { flex: none; width: 46px; height: 20px; border-radius: 7px; background: #ebebeb; gap: 4px; font-size: 8px; }
.chat svg { width: 15px; height: 15px; }

/* Drive */
.drive { flex: 1; min-height: 0; position: relative; display: flex; flex-direction: column; background: #f8fafd; margin: 0 3px 2px 2px; border: 1px solid #ececee; border-top-color: #f2f2f4; border-radius: 6px; }
.drive-head { flex: none; height: 44px; display: flex; align-items: center; padding: 0 11px 4px 17px; }
.brand { display: flex; align-items: center; gap: 6px; width: 154px; font-size: 14px; line-height: 20px; color: #444746; }
.brand svg { width: 24px; height: 22px; }
.search { flex: 0 1 480px; height: 32px; display: flex; align-items: center; gap: 10px; padding: 0 12px 0 11px; border-radius: 16px; background: #e9eef6; font-size: 10px; }
.search svg { width: 16px; height: 16px; }
.search button svg { width: 14px; height: 14px; }
.head-tools { margin-left: auto; display: flex; align-items: center; color: #444; gap: 14px; }
.head-tools svg { width: 16px; height: 16px; }
.head-tools button:nth-child(4) { width: 16px; }
.head-tools button:nth-child(4) svg { width: 13px; height: 13px; }
.head-tools .account { position: relative; width: 21px; height: 21px; border-radius: 50%; background: #b3261e; color: #fff; font-weight: 500; font-size: 10px; }
.account svg { position: absolute; width: 11px; height: 11px; right: -2px; bottom: -2px; }
.body { flex: 1; min-height: 0; display: flex; }

.sidebar { width: 171px; flex: none; display: flex; flex-direction: column; align-items: flex-start; padding: 3px 7px 4px 10px; }
.new { width: 76px; height: 38px; border-radius: 11px; background: #fff; box-shadow: 0 1px 3px #0005; gap: 11px; flex: none; }
.sidebar nav { width: 100%; display: flex; flex-direction: column; gap: 11px; margin-top: 10px; }
.group { height: 64px; display: flex; flex-direction: column; }
.group a { flex: 1; display: flex; align-items: center; gap: 10px; padding-left: 13px; position: relative; }
.group a.tree::before { content: ""; position: absolute; left: 7px; border: 2px solid transparent; border-left: 2px solid #333; border-right: 0; }
.meter { width: 116px; height: 3px; border-radius: 2px; background: #e4e6e8; margin: 4px 0 0 13px; flex: none; }
.meter i { display: block; width: 3px; height: 3px; border-radius: 2px; background: #444; }
.quota { width: 120px; margin: 6px 0 8px 12px; line-height: 13px; color: #5c5e60; }
.upgrade { margin-left: 12px; width: 142px; height: 39px; flex: none; border: 1px solid #85888a; border-radius: 14px; padding: 0 20px; line-height: 13px; color: #3a62bd; }
.promo { margin: auto 0 0 -10px; width: 165px; height: 69px; flex: none; border-radius: 3px 8px 8px 3px; background: #c2e7ff; display: flex; justify-content: space-between; align-items: flex-start; padding: 5px 10px 0 16px; color: #264d66; }
.promo span { padding-top: 2px; }

.panel { flex: 1; min-width: 0; margin-bottom: 9px; background: #fff; border-radius: 10px; overflow: hidden; display: flex; flex-direction: column; padding-left: 13px; }
.title-row { flex: none; height: 43px; display: flex; align-items: center; padding-right: 25px; }
h1 { margin: 0 auto 0 0; font-size: 15px; line-height: 20px; font-weight: 400; display: flex; align-items: center; gap: 7px; color: #2f3031; }
h1 svg { width: 7px; height: 4px; }
.view { display: flex; height: 21px; border: 1px solid #747775; border-radius: 11px; overflow: hidden; margin-right: 10px; }
.view button { width: 35px; gap: 2px; }
.view .on { width: 37px; background: #c2e7ff; border-right: 1px solid #747775; }
.actions { flex: none; height: 26px; margin-right: 14px; border-radius: 13px; background: #f0f4f9; display: flex; align-items: center; padding-left: 5px; }
.actions button { width: 13px; margin-right: 16px; }
.actions button:first-child { margin-right: 9px; }
.actions button:first-child svg { width: 11px; height: 11px; }
.actions span { width: 81px; }
.actions .off { color: #aaa; }
.listing { flex: 1; min-height: 0; display: flex; align-items: flex-start; }
table { flex: 1; min-width: 0; table-layout: fixed; border-collapse: separate; border-spacing: 0; margin-right: 9px; width: 100%; }
.c-owner, .c-date { width: 143px; }
.c-size { width: 123px; }
.c-menu { width: 66px; }
th, td { height: 32px; padding: 0; border-bottom: 1px solid #cdcfd1; text-align: left; font-weight: 400; white-space: nowrap; vertical-align: middle; }
th { height: 35px; padding-top: 4px; }
th:first-child { padding-left: 5px; }
th svg, td svg, td b { display: inline-block; vertical-align: middle; }
.sort { display: inline-flex; width: 15px; height: 15px; border-radius: 50%; background: #c2e7ff; align-items: center; justify-content: center; vertical-align: middle; margin-left: 3px; }
.sort svg { width: 10px; height: 10px; }
.cut { width: 56px; overflow: hidden; }
.order svg { margin-right: 4px; }
td:first-child { padding-left: 14px; color: #3a3c3e; }
td { color: #626466; }
.jar { width: 11px; height: 11px; margin-right: 13px; }
.shared { width: 11px; height: 11px; margin-left: 6px; color: #444; }
td b { width: 16px; height: 16px; line-height: 16px; border-radius: 50%; background: #239440; color: #fff; text-align: center; font-weight: 600; margin-right: 5px; }
td:last-child { padding-right: 15px; }
td button { margin-left: auto; }
td button svg { width: 5px; height: 12px; color: #222; }
.selected td { background: #c2e7ff; color: #3a5d74; }
.scroll { flex: none; width: 5px; height: 426px; margin-top: 3px; border-radius: 3px; background: #b9bbbd; }
.rail { flex: none; width: 36px; display: flex; flex-direction: column; align-items: center; padding: 10px 0 12px; gap: 25px; color: #111; }
.rail hr { width: 12px; border: 0; border-top: 1px solid #e2e4e8; margin: 0 0 -2px; }
.rail .hide { margin-top: auto; }

.toast { position: absolute; left: 16px; bottom: 15px; width: 186px; height: 35px; background: #1f1f1f; border-radius: 2px; color: #e6e6e6; display: flex; align-items: center; justify-content: space-between; padding: 0 18px 0 15px; font-weight: 500; white-space: nowrap; box-shadow: 0 1px 3px #0006; }
.toast svg { width: 10px; height: 10px; color: #aaa; }

/* Windows taskbar */
.taskbar { flex: none; height: 27px; display: flex; background: linear-gradient(90deg, #1f1f1f 20%, #3a2321 26%, #3a2321 50%, #1e1e1e 72%); color: #fff; font-size: 8px; line-height: 12px; }
.start { width: 32px; background: #1c1c1c; }
.task-search { width: 230px; background: #f1f1f1; border: 1px solid #c9c9c9; color: #555; display: flex; align-items: center; gap: 6px; padding-left: 8px; font-size: 9px; }
.taskview { width: 33px; background: #282828; }
.apps { display: flex; }
.apps button { width: 33px; border-bottom: 2px solid transparent; }
.apps svg { width: 17px; height: 17px; }
.apps button:not(.open) svg { width: 16px; height: 16px; }
.apps .open { border-bottom-color: #76b9ed; }
.apps .open:not(.current) { width: 27px; margin: 0 3px; }
.apps .current { width: 32px; background: #4a4a4c; }
.tray { margin-left: auto; display: flex; align-items: center; gap: 4px; padding-right: 11px; }
.tray span { margin: 0 5px 0 3px; }
.tray time { text-align: center; }
.notice { position: relative; margin-left: 5px; width: 18px; }
.notice i { position: absolute; left: 6px; top: 3px; width: 11px; height: 11px; border-radius: 50%; background: #333; border: 1px solid #aaa; font: 8px/9px "Noto Sans", sans-serif; text-align: center; }

/* Downloads flyout, fading out over the page */
.downloads { position: absolute; top: 52px; right: 77px; width: 240px; height: 430px; overflow: hidden; border-radius: 5px; background: rgba(255, 255, 255, .55); box-shadow: 0 3px 10px #0003; color: #858585; font-size: 8px; line-height: 12px; }
.downloads header { height: 23px; display: flex; align-items: center; gap: 9px; padding: 0 7px 3px 10px; border-bottom: 1px solid #dadcde; }
.downloads h2 { margin: 0 auto 0 0; font-size: 9px; font-weight: 400; }
.downloads ul { list-style: none; margin: 0; padding: 9px 10px 0; height: 480px; display: grid; grid-template-rows: repeat(12, 1fr); }
.downloads li { display: flex; gap: 8px; white-space: nowrap; }
.downloads li > svg { width: 10px; height: 10px; }
.downloads li a { display: table; font: 7px/9px Roboto, sans-serif; border-bottom: 1px solid #aaa; margin-top: 2px; }
.downloads small { display: block; font: 7px/12px Roboto, sans-serif; }
.dl-scroll { position: absolute; right: 1px; top: 31px; width: 4px; height: 233px; background: #999; opacity: .8; border-radius: 2px; }
.pointer { position: absolute; left: 1025px; top: 5px; width: 13px; height: 13px; }
```
